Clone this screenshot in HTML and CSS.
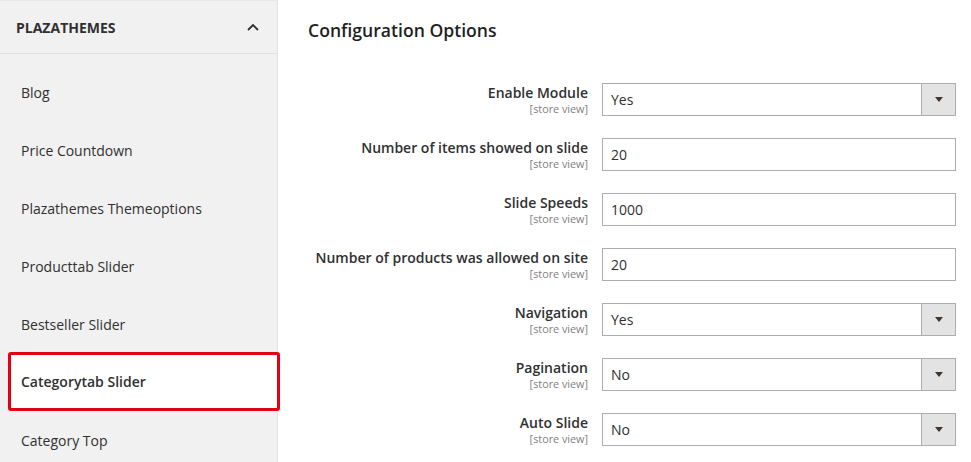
FILE: index.html
```html
<!DOCTYPE html>
<html>
<head>
<meta charset="utf-8">
<link rel="stylesheet" href="styles.css">
</head>
<body>
<div class="page">
  <aside class="sidebar">
    <div class="side-head">
      <span class="side-title">PLAZATHEMES</span>
      <svg class="chev" width="12" height="8" viewBox="0 0 12 8"><path d="M1 7 L6 2 L11 7" fill="none" stroke="#303030" stroke-width="1.8"/></svg>
    </div>
    <ul class="side-list">
      <li class="side-item">Blog</li>
      <li class="side-item">Price Countdown</li>
      <li class="side-item">Plazathemes Themeoptions</li>
      <li class="side-item">Producttab Slider</li>
      <li class="side-item">Bestseller Slider</li>
      <li class="side-item active">Categorytab Slider</li>
      <li class="side-item">Category Top</li>
    </ul>
  </aside>
  <main class="main">
    <h2 class="title">Configuration Options</h2>
    <div class="form">
      <div class="label"><span class="lname">Enable Module</span><span class="scope">[store view]</span></div>
      <div class="select"><span class="val">Yes</span><span class="btn"><i class="tri"></i></span></div>

      <div class="label"><span class="lname">Number of items showed on slide</span><span class="scope">[store view]</span></div>
      <div class="input"><span class="val">20</span></div>

      <div class="label"><span class="lname">Slide Speeds</span><span class="scope">[store view]</span></div>
      <div class="input"><span class="val">1000</span></div>

      <div class="label"><span class="lname">Number of products was allowed on site</span><span class="scope">[store view]</span></div>
      <div class="input"><span class="val">20</span></div>

      <div class="label"><span class="lname">Navigation</span><span class="scope">[store view]</span></div>
      <div class="select"><span class="val">Yes</span><span class="btn"><i class="tri"></i></span></div>

      <div class="label"><span class="lname">Pagination</span><span class="scope">[store view]</span></div>
      <div class="select"><span class="val">No</span><span class="btn"><i class="tri"></i></span></div>

      <div class="label"><span class="lname">Auto Slide</span><span class="scope">[store view]</span></div>
      <div class="select"><span class="val">No</span><span class="btn"><i class="tri"></i></span></div>
    </div>
  </main>
</div>
</body>
</html>
```

FILE: styles.css
```css
* { box-sizing: border-box; }
html, body { margin: 0; padding: 0; background: #fff; }
body {
  font-family: "Open Sans", "Noto Sans", sans-serif;
  color: #303030;
  width: 971px;
  height: 462px;
  overflow: hidden;
}
.page { display: flex; height: 462px; }

.sidebar {
  width: 278px;
  flex: 0 0 278px;
  background: #f1f1f1;
  border-right: 1px solid #e3e3e3;
  border-top: 1px solid #e6e6e6;
}
.side-head {
  height: 53px;
  border-bottom: 1px solid #e0e0e0;
  display: flex;
  align-items: center;
  justify-content: space-between;
  padding: 0 18px 0 16px;
}
.side-title { font-weight: 700; font-size: 14px; letter-spacing: 0; }
.chev { display: block; margin-top: -1px; }
.side-list { list-style: none; margin: 0; padding: 9px 0 0; }
.side-item {
  height: 58px;
  display: flex;
  align-items: center;
  padding-left: 21px;
  font-size: 14px;
}
.side-item.active {
  background: #fff;
  border: 3px solid #e3000f;
  border-radius: 3px;
  height: 59px;
  margin: -1px -3px 0 8px;
  padding-left: 10px;
  font-weight: 600;
  position: relative;
}

.main { flex: 1; padding: 20px 15px 0 30px; }
.title {
  margin: 0 0 43px;
  font-size: 17.6px;
  line-height: 20px;
  font-weight: 600;
  color: #1f1f1f;
}
.form {
  display: grid;
  grid-template-columns: 280px 354px;
  column-gap: 14px;
  row-gap: 22px;
}
.label {
  display: flex;
  flex-direction: column;
  align-items: flex-end;
  padding-top: 1px;
}
.lname { font-size: 14px; font-weight: 600; line-height: 18px; }
.scope { font-size: 10.8px; line-height: 12px; color: #808080; margin-top: 1px; }
.input, .select {
  height: 33px;
  border: 1px solid #adadad;
  display: flex;
  align-items: center;
  background: #fff;
}
.val { flex: 1; padding-left: 8px; font-size: 14px; }
.btn {
  width: 34px;
  align-self: stretch;
  background: #e3e3e3;
  border-left: 1px solid #adadad;
  display: flex;
  align-items: center;
  justify-content: center;
}
.tri {
  width: 0; height: 0;
  border-left: 4px solid transparent;
  border-right: 4px solid transparent;
  border-top: 5px solid #41362f;
}
```
